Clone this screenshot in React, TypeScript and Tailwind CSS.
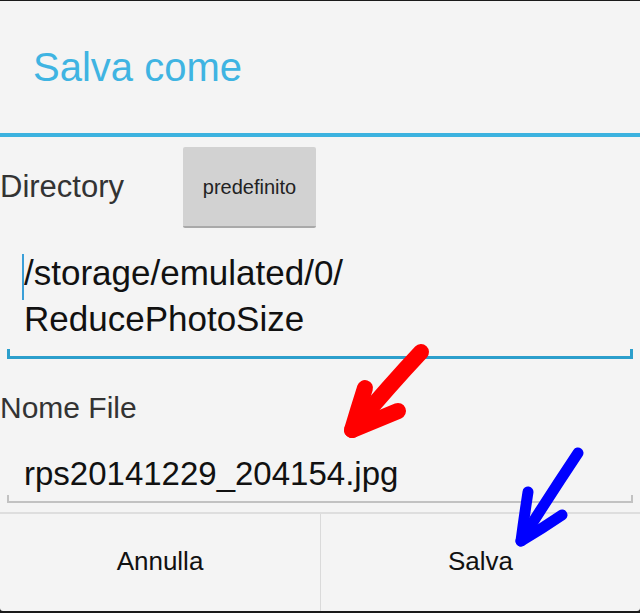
export default function App() {
  const font = { fontFamily: '"Liberation Sans", Arial, sans-serif' };

  return (
    <div className="relative h-[613px] w-[640px] overflow-hidden bg-[#1a1a1a]" style={font}>
      <div className="mt-px flex h-[610px] flex-col rounded-b-[3px] bg-[#f4f4f4]">
        {/* header */}
        <div className="flex h-[132px] items-center pl-[33px]">
          <h1 className="text-[40px] leading-none text-[#3fb4e2]">Salva come</h1>
        </div>
        <div className="h-[4px] bg-[#3cb2df]" />

        {/* directory */}
        <div className="mt-[10px] flex items-center">
          <span className="w-[183px] text-[31px] text-[#333]">Directory</span>
          <button className="h-[81px] w-[133px] rounded-[2px] border-b-2 border-[#a9a9a9] bg-[#d2d2d2] text-[20px] text-[#222]">
            predefinito
          </button>
        </div>

        <div className="mx-[7px] mt-[22px]">
          <div className="relative pl-[17px] text-[35px] leading-[46px] text-[#111]">
            <span className="absolute left-[15px] top-[4px] h-[46px] w-[2px] bg-[#3a9fd8]" />
            <div>/storage/emulated/0/</div>
            <div>ReducePhotoSize</div>
          </div>
          <div className="mt-[7px] h-[10px] border-x-[3px] border-b-[3px] border-[#2c9fcc]" />
        </div>

        {/* file name */}
        <div className="mt-[34px] text-[30px] leading-none text-[#333]">Nome File</div>
        <div className="mx-[7px] mt-[31px]">
          <div className="pl-[17px] text-[33px] leading-[40px] text-[#111]">rps20141229_204154.jpg</div>
          <div className="mt-[1px] h-[8px] border-x-2 border-b-2 border-[#c2c2c2]" />
        </div>

        {/* buttons */}
        <div className="mt-[9px] grid flex-1 grid-cols-2 border-t-2 border-[#dedede]">
          <button className="flex items-center justify-center pb-[2px] text-[26px] text-[#111]">Annulla</button>
          <button className="flex items-center justify-center border-l border-[#dadada] pb-[2px] text-[26px] text-[#111]">
            Salva
          </button>
        </div>
      </div>

      {/* hand-drawn arrows */}
      <svg className="pointer-events-none absolute left-0 top-0" width="640" height="613" viewBox="0 0 640 613">
        <g fill="none" stroke="#ff0000" strokeWidth="16" strokeLinecap="round" strokeLinejoin="round">
          <path d="M421 352 Q390 385 352 430" />
          <path d="M365 388 Q358 410 352 430 Q376 420 398 411" />
        </g>
        <g fill="none" stroke="#0000ff" strokeWidth="11" strokeLinecap="round" strokeLinejoin="round">
          <path d="M578 453 Q550 495 521 541" />
          <path d="M528 492 Q524 518 521 541 Q543 528 562 515" />
        </g>
      </svg>
    </div>
  );
}
